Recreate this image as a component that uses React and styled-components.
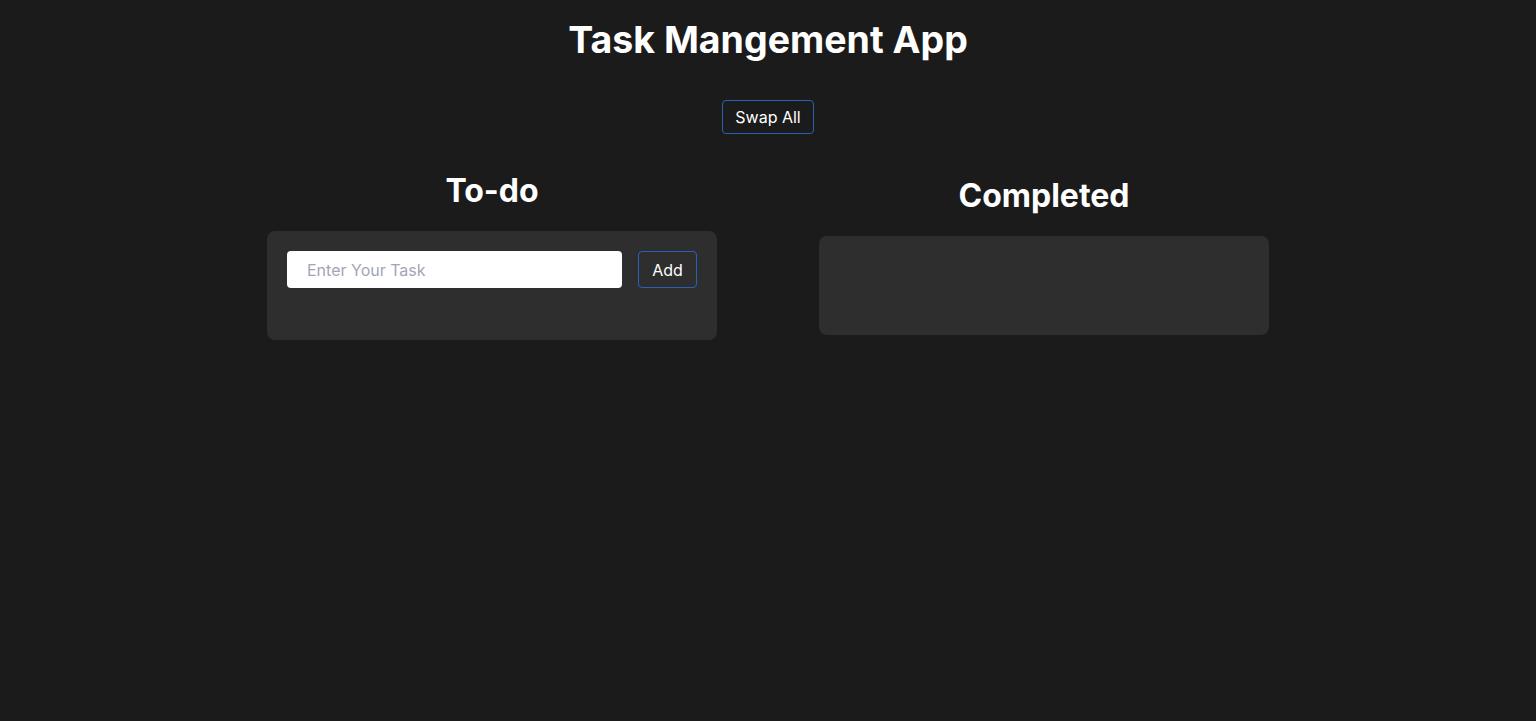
import React, { useState } from 'react'
import styled, { createGlobalStyle } from 'styled-components'

const GlobalStyle = createGlobalStyle`
  * { box-sizing: border-box; }
  body {
    margin: 0;
    background-color: #1b1b1b;
    color: #ffffff;
    font-family: Inter, "Noto Sans", sans-serif;
  }
`

const Page = styled.div`
  display: flex;
  flex-direction: column;
  align-items: center;
  min-height: 721px;
`

const Title = styled.h1`
  margin: 10px 0 0;
  font-size: 37.5px;
  line-height: 60px;
  font-weight: 700;
`

const OutlineButton = styled.button`
  font-family: inherit;
  font-size: 16px;
  line-height: 22px;
  color: #ffffff;
  background: transparent;
  border: 1px solid #2c5fb8;
  border-radius: 4px;
  padding: 5px 12px;
  cursor: pointer;
`

const SwapButton = styled(OutlineButton)`
  margin-top: 30px;
  width: 92px;
`

const Board = styled.div`
  display: flex;
  justify-content: center;
  align-items: center;
  gap: 102px;
  margin-top: 33px;
`

const Column = styled.div`
  width: 450px;
  display: flex;
  flex-direction: column;
`

const ColumnTitle = styled.h2`
  margin: 0 0 16px;
  font-size: 32px;
  line-height: 48px;
  font-weight: 700;
  text-align: center;
`

const Card = styled.div`
  background-color: #2e2e2e;
  border-radius: 8px;
  padding: 20px;
  min-height: 99px;
`

const Form = styled.form`
  display: flex;
  gap: 16px;
  margin-bottom: 32px;
`

const TaskInput = styled.input`
  width: 335px;
  height: 37px;
  border: none;
  border-radius: 4px;
  padding: 0 20px;
  font-family: inherit;
  font-size: 16px;
  color: #222;
  background: #ffffff;
  outline: none;

  &::placeholder {
    color: #a2a5b7;
  }
`

const AddButton = styled(OutlineButton)`
  width: 59px;
  height: 37px;
  padding: 0;
`

export default function App () {
  const [task, setTask] = useState('')
  return (
    <>
      <GlobalStyle />
      <Page>
        <Title>Task Mangement App</Title>
        <SwapButton>Swap All</SwapButton>
        <Board>
          <Column>
            <ColumnTitle>To-do</ColumnTitle>
            <Card>
              <Form onSubmit={(e) => e.preventDefault()}>
                <TaskInput
                  type={'text'}
                  value={task}
                  onChange={(e) => setTask(e.target.value)}
                  placeholder={'Enter Your Task'}
                />
                <AddButton type={'submit'}>Add</AddButton>
              </Form>
            </Card>
          </Column>
          <Column>
            <ColumnTitle>Completed</ColumnTitle>
            <Card />
          </Column>
        </Board>
      </Page>
    </>
  )
}
